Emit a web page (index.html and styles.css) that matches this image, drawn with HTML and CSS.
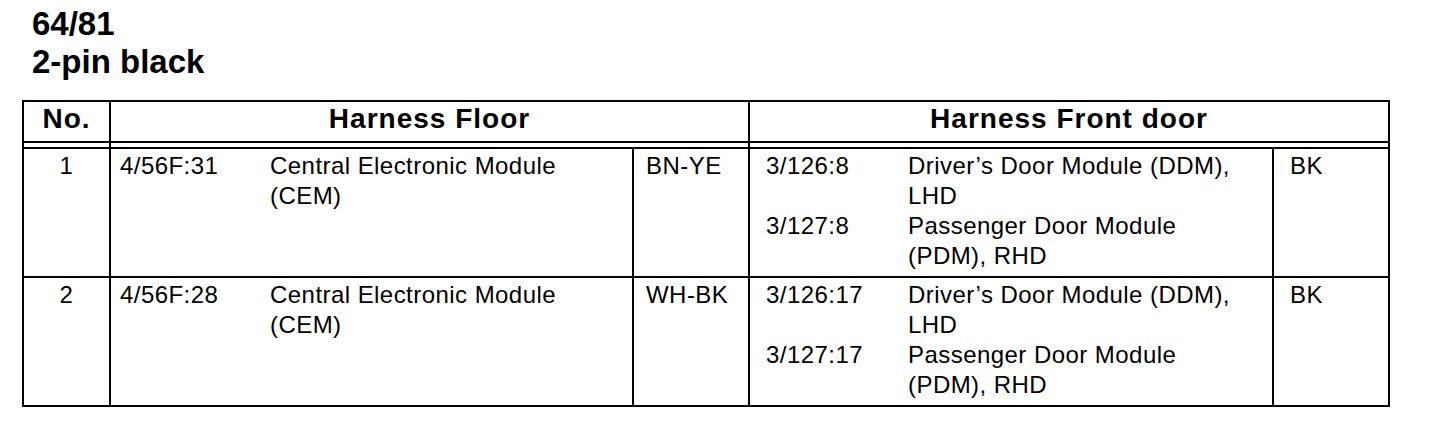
FILE: index.html
```html
<!DOCTYPE html>
<html lang="en">
<head>
<meta charset="utf-8">
<title>64/81 2-pin black</title>
<link rel="stylesheet" href="styles.css">
</head>
<body>
<div class="page">
  <div class="title">
    <div>64/81</div>
    <div>2-pin black</div>
  </div>
  <div class="sheet">
    <div class="row head">
      <div class="cell rule">No.</div>
      <div class="cell rule">Harness Floor</div>
      <div class="cell">Harness Front door</div>
    </div>
    <div class="row body">
      <div class="cell num rule">1</div>
      <div class="cell conn-f">4/56F:31</div>
      <div class="cell desc rule">Central Electronic Module<br>(CEM)</div>
      <div class="cell color-f rule">BN-YE</div>
      <div class="cell conn-d">
        <div class="entry">3/126:8</div>
        <div class="entry">3/127:8</div>
      </div>
      <div class="cell desc rule">
        <div class="entry">Driver’s Door Module (DDM),<br>LHD</div>
        <div class="entry">Passenger Door Module<br>(PDM), RHD</div>
      </div>
      <div class="cell color-d">BK</div>
    </div>
    <div class="row body">
      <div class="cell num rule">2</div>
      <div class="cell conn-f">4/56F:28</div>
      <div class="cell desc rule">Central Electronic Module<br>(CEM)</div>
      <div class="cell color-f rule">WH-BK</div>
      <div class="cell conn-d">
        <div class="entry">3/126:17</div>
        <div class="entry">3/127:17</div>
      </div>
      <div class="cell desc rule">
        <div class="entry">Driver’s Door Module (DDM),<br>LHD</div>
        <div class="entry">Passenger Door Module<br>(PDM), RHD</div>
      </div>
      <div class="cell color-d">BK</div>
    </div>
  </div>
</div>
</body>
</html>
```

FILE: styles.css
```css
html, body {
  margin: 0;
  padding: 0;
  background: #ffffff;
  color: #000000;
  font-family: "Liberation Sans", Arial, sans-serif;
}

.page {
  padding: 5px 0 0 22px;
}

.title {
  padding-left: 10px;
  font-size: 33px;
  line-height: 38px;
  font-weight: bold;
  margin-bottom: 19px;
}

.sheet {
  width: 1368px;
  box-sizing: border-box;
  border: 2px solid #000;
}

.row {
  display: grid;
}

.row.head {
  grid-template-columns: 87px 639px 638px;
  border-bottom: 2px solid #000;
  background: linear-gradient(to bottom, transparent 39px, #000 39px, #000 41px, transparent 41px);
}

.row.body {
  grid-template-columns: 87px 150px 373px 116px 149px 375px 114px;
}

.row.body + .row.body {
  border-top: 2px solid #000;
}

.cell {
  box-sizing: border-box;
}

.cell.rule {
  border-right: 2px solid #000;
}

.head .cell {
  font-size: 28px;
  line-height: 30px;
  font-weight: bold;
  letter-spacing: 1px;
  text-align: center;
  padding: 2px 0 13px;
}

.body .cell {
  font-size: 24px;
  line-height: 30px;
  letter-spacing: 0.45px;
  padding: 2px 0 5px 9px;
}

.body .cell.num {
  text-align: center;
  padding-left: 0;
}

.body .cell.color-f {
  padding-left: 12px;
}

.body .cell.conn-d {
  padding-left: 16px;
}

.body .cell.color-d {
  padding-left: 16px;
}

.entry {
  min-height: 60px;
}
```
